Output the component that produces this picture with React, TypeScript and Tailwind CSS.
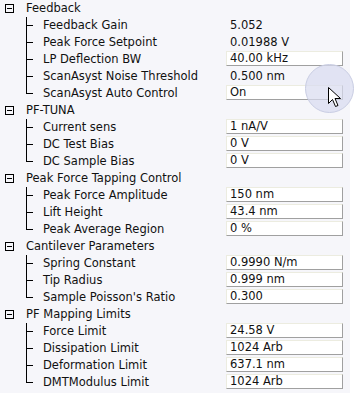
import React from 'react';

type Param = { label: string; value: string; boxed?: boolean };
type Group = { title: string; params: Param[] };

const groups: Group[] = [
  {
    title: 'Feedback',
    params: [
      { label: 'Feedback Gain', value: '5.052' },
      { label: 'Peak Force Setpoint', value: '0.01988 V' },
      { label: 'LP Deflection BW', value: '40.00 kHz', boxed: true },
      { label: 'ScanAsyst Noise Threshold', value: '0.500 nm' },
      { label: 'ScanAsyst Auto Control', value: 'On', boxed: true },
    ],
  },
  {
    title: 'PF-TUNA',
    params: [
      { label: 'Current sens', value: '1 nA/V', boxed: true },
      { label: 'DC Test Bias', value: '0 V', boxed: true },
      { label: 'DC Sample Bias', value: '0 V', boxed: true },
    ],
  },
  {
    title: 'Peak Force Tapping Control',
    params: [
      { label: 'Peak Force Amplitude', value: '150 nm', boxed: true },
      { label: 'Lift Height', value: '43.4 nm', boxed: true },
      { label: 'Peak Average Region', value: '0 %', boxed: true },
    ],
  },
  {
    title: 'Cantilever Parameters',
    params: [
      { label: 'Spring Constant', value: '0.9990 N/m', boxed: true },
      { label: 'Tip Radius', value: '0.999 nm', boxed: true },
      { label: "Sample Poisson's Ratio", value: '0.300', boxed: true },
    ],
  },
  {
    title: 'PF Mapping Limits',
    params: [
      { label: 'Force Limit', value: '24.58 V', boxed: true },
      { label: 'Dissipation Limit', value: '1024 Arb', boxed: true },
      { label: 'Deformation Limit', value: '637.1 nm', boxed: true },
      { label: 'DMTModulus Limit', value: '1024 Arb', boxed: true },
    ],
  },
];

const CollapseIcon = () => (
  <div className="relative ml-[5px] h-[9px] w-[9px] border border-black">
    <div className="absolute left-px right-px top-[3px] h-px bg-black" />
  </div>
);

const ParamRow = ({ p, last }: { p: Param; last: boolean }) => (
  <div className="flex h-[17px] items-center">
    <div className="relative ml-[26px] h-full w-[17px]">
      <div className={`absolute left-0 top-0 w-px bg-black ${last ? 'h-[9px]' : 'h-full'}`} />
      <div className="absolute left-0 top-[8px] h-px w-[7px] bg-black" />
    </div>
    <div className="w-[183px] whitespace-nowrap">{p.label}</div>
    {p.boxed ? (
      <div className="mb-[2px] flex h-[15px] w-[117px] items-center border border-b-[#a0a0a0] border-l-[#ecece0] border-r-[#a0a0a0] border-t-[#ecece0] bg-white pl-[3px]">
        {p.value}
      </div>
    ) : (
      <div className="pl-[4px]">{p.value}</div>
    )}
  </div>
);

export default function App() {
  return (
    <div className="flex h-[393px] w-[363px] bg-white">
      <div
        className="relative w-[350px] bg-[#f6f6fa] text-[11.5px] leading-none text-[#111]"
        style={{ fontFamily: '"DejaVu Sans", sans-serif' }}
      >
        {groups.map((g) => (
          <div key={g.title}>
            <div className="flex h-[17px] items-center">
              <CollapseIcon />
              <div className="ml-[12px] whitespace-nowrap">{g.title}</div>
            </div>
            {g.params.map((p, i) => (
              <ParamRow key={p.label} p={p} last={i === g.params.length - 1} />
            ))}
          </div>
        ))}

        {/* cursor highlight */}
        <div className="absolute left-[305px] top-[64px] h-[49px] w-[49px] rounded-full border border-[#c9cde3] bg-[#d9dcef]/70" />
        <svg className="absolute left-[328px] top-[87px]" width="13" height="21" viewBox="0 0 13 21">
          <path d="M0.5 0.5 L0.5 16.5 L4.5 12.5 L7.5 19.5 L10 18.5 L7 11.5 L12.5 11.5 Z" fill="white" stroke="black" strokeWidth="1" />
        </svg>
      </div>
    </div>
  );
}
